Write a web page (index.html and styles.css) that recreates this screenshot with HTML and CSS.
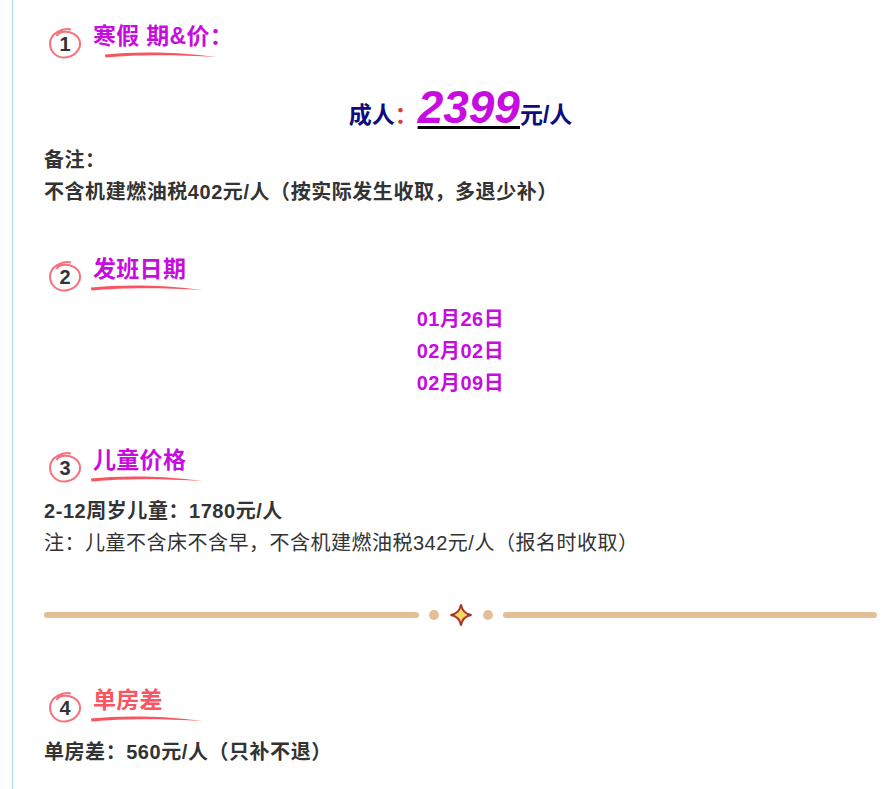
FILE: index.html
```html
<!DOCTYPE html>
<html lang="zh">
<head>
<meta charset="utf-8">
<title>价格</title>
<link rel="stylesheet" href="styles.css">
</head>
<body>
<main class="page">
  <header class="head head-1">
    <span class="badge"><svg class="ring" viewBox="0 0 34 34"><path d="M23 2.500C15 .5 2 6 2 16.500 2 25 9 31 17 30.500 25 30 32.500 24 32 16 31.500 8 22 3.500 14 5 11.500 5.500 9.500 7 8.500 9" /></svg><b>1</b></span>
    <span class="title-wrap"><h2 class="title purple">寒假 期&amp;价：</h2><svg class="swash swash-1" viewBox="0 0 112 7" preserveAspectRatio="none"><path d="M0 3.500C30 .5 70 .5 112 6 70 3.500 30 3.500 1 6.500 0 6.500 0 4 0 3.500z"/></svg></span>
  </header>
  <p class="price"><span class="navy">成人</span><span class="red">：</span><span class="big"><span class="big-num">2399</span></span><span class="navy">元/人</span></p>
  <p class="line strong">备注：</p>
  <p class="line strong">不含机建燃油税402元/人（按实际发生收取，多退少补）</p>

  <header class="head head-2">
    <span class="badge"><svg class="ring" viewBox="0 0 34 34"><path d="M23 2.500C15 .5 2 6 2 16.500 2 25 9 31 17 30.500 25 30 32.500 24 32 16 31.500 8 22 3.500 14 5 11.500 5.500 9.500 7 8.500 9" /></svg><b>2</b></span>
    <span class="title-wrap"><h2 class="title purple">发班日期</h2><svg class="swash" viewBox="0 0 112 7" preserveAspectRatio="none"><path d="M0 3.500C30 .5 70 .5 112 6 70 3.500 30 3.500 1 6.500 0 6.500 0 4 0 3.500z"/></svg></span>
  </header>
  <div class="dates">
    <p>01月26日</p>
    <p>02月02日</p>
    <p>02月09日</p>
  </div>

  <header class="head head-3">
    <span class="badge"><svg class="ring" viewBox="0 0 34 34"><path d="M23 2.500C15 .5 2 6 2 16.500 2 25 9 31 17 30.500 25 30 32.500 24 32 16 31.500 8 22 3.500 14 5 11.500 5.500 9.500 7 8.500 9" /></svg><b>3</b></span>
    <span class="title-wrap"><h2 class="title purple">儿童价格</h2><svg class="swash" viewBox="0 0 112 7" preserveAspectRatio="none"><path d="M0 3.500C30 .5 70 .5 112 6 70 3.500 30 3.500 1 6.500 0 6.500 0 4 0 3.500z"/></svg></span>
  </header>
  <p class="line strong">2-12周岁儿童：1780元/人</p>
  <p class="line">注：儿童不含床不含早，不含机建燃油税342元/人（报名时收取）</p>

  <div class="divider">
    <span class="rule"></span>
    <span class="dot"></span>
    <svg class="star" viewBox="0 0 24 24"><path d="M12 1.500C13 8 16 11 22.500 12 16 13 13 16 12 22.500 11 16 8 13 1.500 12 8 11 11 8 12 1.500z"/></svg>
    <span class="dot"></span>
    <span class="rule"></span>
  </div>

  <header class="head head-4">
    <span class="badge"><svg class="ring" viewBox="0 0 34 34"><path d="M23 2.500C15 .5 2 6 2 16.500 2 25 9 31 17 30.500 25 30 32.500 24 32 16 31.500 8 22 3.500 14 5 11.500 5.500 9.500 7 8.500 9" /></svg><b>4</b></span>
    <span class="title-wrap"><h2 class="title coral">单房差</h2><svg class="swash" viewBox="0 0 112 7" preserveAspectRatio="none"><path d="M0 3.500C30 .5 70 .5 112 6 70 3.500 30 3.500 1 6.500 0 6.500 0 4 0 3.500z"/></svg></span>
  </header>
  <p class="line strong last">单房差：560元/人（只补不退）</p>
</main>
</body>
</html>
```
FILE: styles.css
```css
html, body { margin: 0; padding: 0; background: #fff; }
body {
  height: 789px;
  overflow: hidden;
  font-family: "Liberation Sans", "Noto Sans CJK SC", sans-serif;
  color: #333;
}
.page {
  margin-left: 12px;
  height: 789px;
  box-sizing: border-box;
  border-left: 1px solid #a6d8f5;
  padding: 22px 13px 0 31px;
}
p, h2 { margin: 0; }
.line { font-size: 20px; letter-spacing: .5px; line-height: 32px; }
.strong { font-weight: 700; letter-spacing: .55px; }
.last { margin-top: 1px; }
.head { display: flex; align-items: flex-start; height: 49px; padding-left: 4px; }
.head-2 { margin-top: 47px; height: 48px; }
.head-3 { margin-top: 47px; }
.head-4 { margin-top: 56px; }
.badge { position: relative; width: 34px; height: 34px; margin-top: 5px; display: flex; align-items: center; justify-content: center; }
.badge b { position: relative; font-size: 20px; line-height: 1; }
.ring { position: absolute; inset: 0; width: 34px; height: 34px; fill: none; stroke: #f8707c; stroke-width: 2; }
.title-wrap { display: block; margin-left: 11px; position: relative; }
.title { font-size: 23px; letter-spacing: .3px; line-height: 28px; font-weight: 700; }
.purple { color: #c70ce0; }
.coral { color: #f9545f; }
.swash { position: absolute; display: block; left: -2px; top: 29px; width: 112px; height: 7px; fill: #f9545f; }
.swash-1 { left: 12px; }
.price { text-align: center; font-size: 23px; font-weight: 700; line-height: 48px; margin: 12px 0 5px; }
.navy { color: #0c0c80; }
.red { color: #e8352a; }
.big { text-decoration: underline #000 3px; text-underline-offset: 3px; }
.big-num { color: #c70ce0; font-size: 46px; font-style: italic; }
.dates { text-align: center; color: #c70ce0; font-size: 20px; letter-spacing: .5px; font-weight: 700; line-height: 32px; }
.divider { display: flex; align-items: center; gap: 10px; margin-top: 41px; height: 30px; }
.rule { flex: 1; height: 6px; border-radius: 3px; background: #e3bf98; }
.dot { width: 10px; height: 10px; border-radius: 50%; background: #e3bf98; }
.star { width: 24px; height: 24px; fill: #f7d860; stroke: #a8322a; stroke-width: 1.800; }
```
